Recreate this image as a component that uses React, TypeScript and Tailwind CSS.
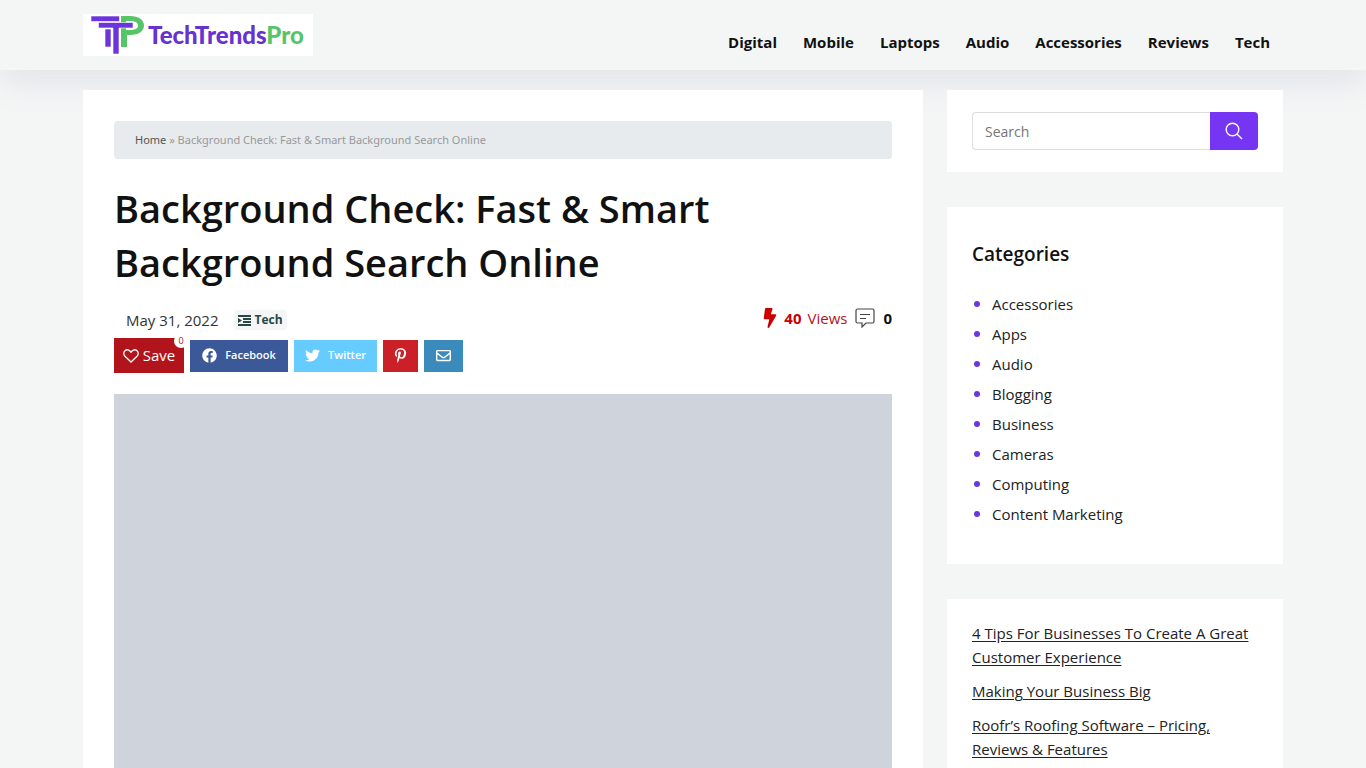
import React, { useState } from 'react';
import { FaBolt, FaFacebook, FaPinterestP, FaRegEnvelope, FaTwitter } from 'react-icons/fa';

const navItems = ['Digital', 'Mobile', 'Laptops', 'Audio', 'Accessories', 'Reviews', 'Tech'];

const categories = [
    'Accessories',
    'Apps',
    'Audio',
    'Blogging',
    'Business',
    'Cameras',
    'Computing',
    'Content Marketing',
];

const recentPosts = [
    '4 Tips For Businesses To Create A Great Customer Experience',
    'Making Your Business Big',
    'Roofr’s Roofing Software – Pricing, Reviews & Features',
];

const Logo = () => (
    <a href="#" className="flex items-center h-[42px] w-[230px] bg-white pl-2 gap-1">
        <svg viewBox="0 0 53 38" className="w-[53px] h-[38px] shrink-0" aria-hidden="true">
            <path d="M30 0h9c9 0 14 4 14 9.500S48 19 39 19h-3v12h-6z" fill="#56c568" />
            <path d="M35 5h4c5 0 8 1.500 8 4.500S44 14 39 14h-4z" fill="#fff" />
            <g fill="#6c35dc" stroke="#fff" strokeWidth="0.6">
                <path d="M0 0h28.500v5.500H0z" />
                <path d="M14 13h6v18h-6z" />
                <path d="M7.500 6.500H42V12H28v26h-6V12H7.500z" />
            </g>
        </svg>
        <span className="font-['Lato'] text-2xl leading-none font-black text-[#6633cf]">
            TechTrends<span className="text-[#56c568]">Pro</span>
        </span>
    </a>
);

const Header = () => (
    <header className="relative bg-[#f4f6f6] shadow-[0_15px_30px_0_rgba(119,123,146,0.12)]">
        <div className="max-w-[1200px] mx-auto h-[70px] flex items-center justify-between">
            <Logo />
            <nav className="flex gap-[26px] pt-[14px] pr-[13px]">
                {navItems.map((item) => (
                    <a key={item} href="#" className="text-[15px] leading-6 font-bold text-[#111] hover:text-[#7635f3]">
                        {item}
                    </a>
                ))}
            </nav>
        </div>
    </header>
);

const PostMeta = () => (
    <div className="flex items-center justify-between h-6 mt-4">
        <div className="flex items-center gap-4 pl-3 pt-1">
            <time dateTime="2022-05-31" className="text-[15px] leading-6 text-[#333]">May 31, 2022</time>
            <a href="#" className="flex items-center gap-[3px] h-5 px-1 rounded-sm bg-[#f4f6f6] text-xs font-bold text-[#2a4747]">
                <svg viewBox="0 0 13 11" className="w-[13px] h-[11px]" fill="currentColor" aria-hidden="true">
                    <path d="M0 0h13v2H0zM5 3h8v2H5zM5 6h8v2H5zM0 9h13v2H0zM0 3l4 2.500L0 8z" />
                </svg>
                Tech
            </a>
        </div>
        <div className="flex items-center gap-2 text-[15px] leading-6">
            <span className="flex items-center gap-[6px] text-[#c00]">
                <FaBolt className="w-4 h-5" />
                <b>40</b>
                <span className="text-[#b1141a]">Views</span>
            </span>
            <a href="#" className="flex items-center gap-2 font-bold text-[#111]">
                <svg viewBox="0 0 20 20" className="w-5 h-5" fill="none" stroke="#444" strokeWidth="1.200" aria-hidden="true">
                    <path d="M2.500 1h15A1.500 1.500 0 0 1 19 2.500v11a1.500 1.500 0 0 1-1.500 1.500H11l-4 4v-4H2.500A1.500 1.500 0 0 1 1 13.500v-11A1.500 1.500 0 0 1 2.500 1z" />
                    <path d="M5 6.500h10M5 10.500h6" />
                </svg>
                0
            </a>
        </div>
    </div>
);

const ShareButtons = () => {
    const [saved, setSaved] = useState(0);

    return (
        <div className="flex items-center gap-[6px] mt-2 text-white">
            <button
                onClick={() => setSaved(saved ? 0 : 1)}
                className="relative flex items-center justify-center gap-1 w-[70px] h-[35px] bg-[#b1141a] text-[15px]"
            >
                <svg viewBox="0 0 16 14" className="w-4 h-[14px]" fill="none" stroke="currentColor" strokeWidth="1.300" aria-hidden="true">
                    <path d="M8 13L2 7.200C.4 5.500.4 3.200 1.800 1.900 3.300.5 5.500.6 6.900 2L8 3.200 9.100 2c1.400-1.400 3.600-1.500 5.100-.1 1.400 1.300 1.400 3.600-.2 5.300z" />
                </svg>
                Save
                <span className="absolute -top-1 -right-1 w-[14px] h-[14px] rounded-full bg-white text-[9px] leading-[14px] text-center text-[#b1141a]">
                    {saved}
                </span>
            </button>
            <button className="flex items-center justify-center gap-2 w-[98px] h-8 bg-[#3b5998] text-[11px] font-semibold">
                <FaFacebook className="w-[15px] h-[15px]" />
                Facebook
            </button>
            <button className="flex items-center justify-center gap-2 w-[83px] h-8 bg-[#66ccff] text-[11px] font-semibold">
                <FaTwitter className="w-[15px] h-[15px]" />
                Twitter
            </button>
            <button aria-label="Pinterest" className="flex items-center justify-center w-[35px] h-8 bg-[#cb2027]">
                <FaPinterestP className="w-[15px] h-[15px]" />
            </button>
            <button aria-label="Email" className="flex items-center justify-center w-[39px] h-8 bg-[#3a8bbb]">
                <FaRegEnvelope className="w-[15px] h-[15px]" />
            </button>
        </div>
    );
};

const SearchBox = () => {
    const [query, setQuery] = useState('');

    return (
        <form onSubmit={(e) => e.preventDefault()} className="flex bg-white px-[25px] py-[22px]">
            <input
                type="text"
                aria-label="Search"
                placeholder="Search"
                value={query}
                onChange={(e) => setQuery(e.target.value)}
                className="flex-1 min-w-0 h-[38px] px-3 border border-r-0 border-[#ddd] rounded-l text-sm text-[#111] placeholder:text-[#757575] outline-none"
            />
            <button aria-label="Submit search" className="flex items-center justify-center w-12 h-[38px] rounded-r bg-[#7635f3] text-white">
                <svg viewBox="0 0 18 18" className="w-[18px] h-[18px]" fill="none" stroke="currentColor" strokeWidth="1.400" aria-hidden="true">
                    <circle cx="7.500" cy="7.500" r="6.300" />
                    <path d="M12 12l5 5" />
                </svg>
            </button>
        </form>
    );
};

const Sidebar = () => (
    <aside className="w-[336px] shrink-0 flex flex-col gap-[35px]">
        <SearchBox />
        <section className="bg-white px-[25px] py-[35px]">
            <h2 className="text-[19px] leading-6 font-semibold text-[#111]">Categories</h2>
            <ul className="mt-[23px] text-[15px] leading-[30px] text-[#222]">
                {categories.map((category) => (
                    <li key={category} className="flex items-center gap-3 pl-[2px]">
                        <span className="w-[6px] h-[6px] rounded-full bg-[#6d35e0]"></span>
                        <a href="#" className="hover:text-[#7635f3]">{category}</a>
                    </li>
                ))}
            </ul>
        </section>
        <section className="bg-white px-[25px] pt-[22px] pb-[35px]">
            <ul className="space-y-[10px] text-[15px] leading-6 text-[#222]">
                {recentPosts.map((post) => (
                    <li key={post}>
                        <a href="#" className="underline underline-offset-2">{post}</a>
                    </li>
                ))}
            </ul>
        </section>
    </aside>
);

const App: React.FC = () => {
    return (
        <div className="min-h-screen bg-[#f4f6f6] font-['Open_Sans',sans-serif]">
            <Header />
            <div className="relative max-w-[1200px] mx-auto pt-5 flex items-start gap-6">
                <main className="flex-1 min-w-0 bg-white p-[31px]">
                    <div className="h-[38px] px-[21px] flex items-center rounded bg-[#e7ebee] font-['Noto_Sans',sans-serif] text-[11px] text-[#999]">
                        <span>
                            <a href="#" className="text-[#555]">Home</a> » Background Check: Fast &amp; Smart Background Search Online
                        </span>
                    </div>
                    <h1 className="mt-[22px] mb-[17px] text-[38px] leading-[54px] font-semibold text-[#111]">
                        Background Check: Fast &amp; Smart Background Search Online
                    </h1>
                    <PostMeta />
                    <ShareButtons />
                    {/* Featured image placeholder */}
                    <div className="mt-[21px] aspect-[16/9] bg-[#cfd3dc]"></div>
                </main>
                <Sidebar />
            </div>
        </div>
    );
};

export default App;
